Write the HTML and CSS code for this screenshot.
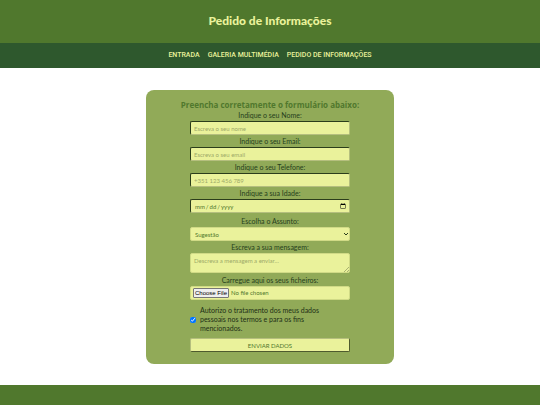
FILE: index.html
```
<!DOCTYPE html>
<html lang="pt">
<head>
  <meta charset="UTF-8">
  <meta name="viewport" content="width=device-width, initial-scale=1.0">
  <title>Pedido de Informações</title>
  <link rel="stylesheet" href="styles.css">
</head>
<body>

  <header>
    <h1>Pedido de Informações</h1>
  </header>

  <nav>
    <a href="index.html">ENTRADA</a>
    <a href="galeria.html">GALERIA MULTIMÉDIA</a>
    <a href="pedido.html">PEDIDO DE INFORMAÇÕES</a>
  </nav>

  <main>
    <form class="formulario">
      <h2>Preencha corretamente o formulário abaixo:</h2>

      <label for="nome">Indique o seu Nome:</label>
      <input class="campo" type="text" id="nome" placeholder="Escreva o seu nome">

      <label for="email">Indique o seu Email:</label>
      <input class="campo" type="email" id="email" placeholder="Escreva o seu email">

      <label for="telefone">Indique o seu Telefone:</label>
      <input class="campo" type="tel" id="telefone" placeholder="+351 123 456 789">

      <label for="idade">Indique a sua Idade:</label>
      <input class="campo data" type="date" id="idade">

      <label for="assunto">Escolha o Assunto:</label>
      <div class="caixa">
        <select class="campo plano assunto" id="assunto">
          <option>Sugestão</option>
          <option>Reclamação</option>
        </select>
        <svg class="seta" viewBox="0 0 6 4"><path d="M1 1l2 2 2-2" fill="none" stroke="#2b3d1b"/></svg>
      </div>

      <label for="mensagem">Escreva a sua mensagem:</label>
      <div class="caixa caixa-mensagem">
        <textarea class="campo plano mensagem" id="mensagem" placeholder="Descreva a mensagem a enviar..."></textarea>
        <svg class="canto" viewBox="0 0 5 5"><path d="M0 5l5-5M3 5l2-2" fill="none" stroke="#7c8555" stroke-width=".6"/></svg>
      </div>

      <label for="ficheiros">Carregue aqui os seus ficheiros:</label>
      <input class="campo plano ficheiros" type="file" id="ficheiros">

      <div class="termos">
        <input type="checkbox" id="termos" checked>
        <label for="termos">Autorizo o tratamento dos meus dados pessoais nos termos e para os fins mencionados.</label>
      </div>

      <button class="campo enviar" type="submit">ENVIAR DADOS</button>
    </form>
  </main>

  <footer></footer>

</body>
</html>
```
FILE: styles.css
```
* {
  box-sizing: border-box;
}

body {
  margin: 0;
  min-height: 100vh;
  display: flex;
  flex-direction: column;
  font-family: Lato, "Liberation Sans", sans-serif;
  font-size: 7px;
  background-color: white;
}

/* Cabeçalho */
header {
  padding: 12px 0 13px;
  text-align: center;
  background-color: #50782d;
}

h1 {
  margin: 0;
  font-size: 12px;
  font-weight: 900;
  line-height: 18px;
  color: #eaf29b;
}

/* Navegação */
nav {
  display: flex;
  justify-content: center;
  gap: 8px;
  padding: 8px 0;
  background-color: #2e582d;
}

nav a {
  font-family: Roboto, sans-serif;
  font-size: 7px;
  font-weight: 500;
  line-height: 9px;
  color: #eaf29b;
  text-decoration: none;
}

nav a:hover {
  text-decoration: underline;
}

/* Formulário */
.formulario {
  display: flex;
  flex-direction: column;
  align-items: center;
  width: 46%;
  margin: 22px auto 21px;
  padding: 10px 12px 12px;
  border-radius: 8px;
  background-color: #91aa58;
}

h2 {
  margin: 0;
  font-family: "Open Sans", sans-serif;
  font-size: 8px;
  line-height: 9px;
  color: #50782d;
  white-space: nowrap;
}

label {
  line-height: 12px;
  color: #26401c;
}

.campo {
  width: 160px;
  height: 14px;
  margin: 0;
  padding: 0 3px;
  border: 1px solid #b5bf7e;
  border-top-color: #2b3d1b;
  border-left-color: #2b3d1b;
  border-radius: 2px;
  font-family: inherit;
  font-size: 6px;
  color: #50782d;
  background-color: #eaf29b;
}

.campo::placeholder {
  color: #9daa68;
}

.plano {
  border-color: #d0da86;
}

.data {
  margin-bottom: 2px;
}

.data::-webkit-calendar-picker-indicator {
  width: 6px;
  height: 6px;
  padding: 0;
}

/* Caixas com ícone por cima do campo */
.caixa {
  display: flex;
  position: relative;
}

.caixa-mensagem {
  margin-bottom: 1px;
}

.assunto {
  appearance: none;
  padding: 0 4px;
}

.seta {
  position: absolute;
  right: 1px;
  top: 5px;
  width: 6px;
  height: 4px;
  pointer-events: none;
}

.mensagem {
  height: 20px;
  padding-top: 3px;
  resize: none;
}

.canto {
  position: absolute;
  right: 1px;
  bottom: 1px;
  width: 5px;
  height: 5px;
  pointer-events: none;
}

.ficheiros {
  padding: 1px 2px;
}

.ficheiros::file-selector-button {
  height: 10px;
  margin: 0 2px 0 0;
  padding: 0 1px;
  border: 1px solid #777777;
  border-radius: 1px;
  font-family: "Liberation Sans", sans-serif;
  font-size: 6px;
  color: black;
  background-color: #efefef;
}

.termos {
  display: flex;
  align-items: center;
  gap: 4px;
  width: 160px;
  padding: 6px 20px 5px 0;
}

.termos input {
  flex: none;
  width: 6px;
  height: 6px;
  margin: 0;
}

.termos label {
  line-height: 9px;
  color: #1d2f16;
}

.enviar {
  border-color: #b5bf7e #4e5a2e #4e5a2e #b5bf7e;
  cursor: pointer;
}

/* Rodapé */
footer {
  flex: 1;
  min-height: 19px;
  background-color: #50782d;
}
```
